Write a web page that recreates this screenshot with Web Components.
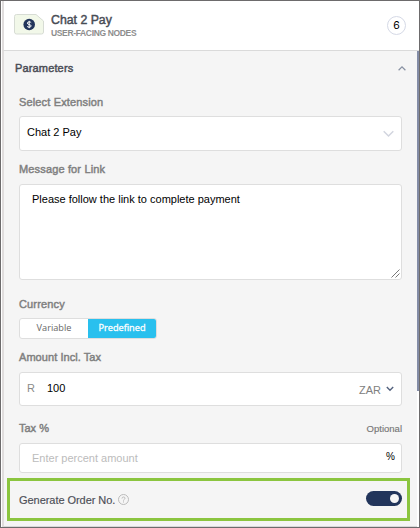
<!DOCTYPE html>
<html lang="en">
<head>
<meta charset="utf-8">
<title>Chat 2 Pay</title>
<style>
    html, body {
        margin: 0;
        height: 100%;
        overflow: hidden;
    }
    body {
        font: 11px/16px "Liberation Sans", Arial, sans-serif;
        color: #000;
    }
</style>
</head>
<body>
<node-panel>
    <node-header slot="header" title="Chat 2 Pay" group="User-facing nodes" count="6"></node-header>
    <panel-section title="Parameters">
        <form-field label="Select Extension" style="--gap: 18px; --label-gap: 6px">
            <select-box value="Chat 2 Pay"></select-box>
        </form-field>
        <form-field label="Message for Link" style="--gap: 10px">
            <text-area value="Please follow the link to complete payment"></text-area>
        </form-field>
        <form-field label="Currency" style="--gap: 16px; --label-gap: 6px">
            <option-switch first="Variable" second="Predefined"></option-switch>
        </form-field>
        <form-field label="Amount Incl. Tax" style="--gap: 10px; --spacing: .06px">
            <amount-input symbol="R" value="100" currency="ZAR"></amount-input>
        </form-field>
        <form-field label="Tax %" hint="Optional" style="--gap: 14px; --spacing: 0">
            <percent-input placeholder="Enter percent amount"></percent-input>
        </form-field>
        <toggle-row label="Generate Order No."></toggle-row>
    </panel-section>
</node-panel>

<script>
class BaseElement extends HTMLElement {
    connectedCallback() {
        if (!this.shadowRoot) {
            this.attachShadow({ mode: 'open' });
        }
        this.shadowRoot.innerHTML = `<style>* { box-sizing: border-box; } span { white-space: nowrap; }</style>${this.template()}`;
    }

    attr(name) {
        return this.getAttribute(name) || '';
    }
}

class NodePanel extends BaseElement {
    template() {
        return `
            <style>
                :host {
                    display: grid;
                    grid-template: 50px 1fr / minmax(0, 1fr) 2px;
                    box-sizing: border-box;
                    width: 420px;
                    height: 528px;
                    border: 1px solid #6d6b6c;
                    background: #fff;
                }
                .head {
                    grid-column: 1 / 3;
                    border-bottom: 1px solid #dadada;
                    border-left: 2px solid #e0dddd;
                    margin-left: 1px;
                }
                .content {
                    background: #f5f5f5;
                    border-left: 2px solid #e0dddd;
                    border-bottom: 1px solid #d8d8d8;
                    margin-left: 1px;
                }
                .thumb {
                    height: 340px;
                    background: #838ca6;
                }
            </style>
            <div class="head"><slot name="header"></slot></div>
            <div class="content"><slot></slot></div>
            <div class="thumb"></div>
        `;
    }
}

class NodeHeader extends BaseElement {
    template() {
        return `
            <style>
                :host {
                    display: flex;
                    height: 49px;
                    padding-left: 10px;
                    box-sizing: border-box;
                }
                svg {
                    flex: none;
                    margin: 12px 7px 0 0;
                }
                .names {
                    flex: 1;
                    display: flex;
                    flex-direction: column;
                    padding-top: 12px;
                }
                .title {
                    font-size: 12.3px;
                    line-height: 15px;
                    color: #484c55;
                    -webkit-text-stroke: .45px;
                }
                .group {
                    font-size: 8.5px;
                    font-weight: bold;
                    line-height: 11px;
                    letter-spacing: -.35px;
                    text-transform: uppercase;
                    color: #8d8d8d;
                }
                .count {
                    width: 19px;
                    height: 19px;
                    margin: 15px 13px 0 0;
                    border: 1px solid #d5d9e6;
                    border-radius: 50%;
                    text-align: center;
                    font: 10.5px/17px Inter, sans-serif;
                }
            </style>
            <svg width="30" height="22" viewBox="0 0 30 22">
                <path d="M2.5 1.5h19.5l7.5 6.5v11a2 2 0 0 1-2 2h-25a2 2 0 0 1-2-2v-15.500a2 2 0 0 1 2-2z" fill="#f2f8e9" stroke="#d7dcd4"/>
                <circle cx="15.200" cy="11.500" r="5.800" fill="#22355b"/>
                <path d="M17.200 9.700q-.6-.8-2-.8-1.800 0-1.800 1.200t1.800 1.400 1.900 1.400-1.900 1.300q-1.500 0-2.100-.9M15.200 7.800v7.400" fill="none" stroke="#fff" stroke-width="1"/>
            </svg>
            <div class="names">
                <span class="title">${this.attr('title')}</span>
                <span class="group">${this.attr('group')}</span>
            </div>
            <span class="count">${this.attr('count')}</span>
        `;
    }
}

class PanelSection extends BaseElement {
    template() {
        return `
            <style>
                :host {
                    display: block;
                    padding: 9px 15px 0;
                }
                header {
                    display: flex;
                    justify-content: space-between;
                    margin: 0 -4px;
                    letter-spacing: .15px;
                    color: #4a4d55;
                    -webkit-text-stroke: .45px;
                }
                header svg {
                    margin-top: 5px;
                }
            </style>
            <header>
                <span>${this.attr('title')}</span>
                <svg width="8" height="7" viewBox="0 0 8 7"><path d="M.6 5.200 4 1.900l3.400 3.300" fill="none" stroke="#8790a2" stroke-width="1.200"/></svg>
            </header>
            <slot></slot>
        `;
    }
}

class FormField extends BaseElement {
    template() {
        return `
            <style>
                :host {
                    display: block;
                    padding-top: var(--gap);
                    width: 383px;
                }
                .label {
                    display: flex;
                    justify-content: space-between;
                    height: 16px;
                    margin-bottom: var(--label-gap, 7px);
                    color: #808080;
                }
                .name {
                    letter-spacing: var(--spacing, .15px);
                    -webkit-text-stroke: .45px;
                }
                .hint {
                    padding-top: 1px;
                    font-size: 9.5px;
                    color: #777;
                    -webkit-text-stroke: .15px;
                }
            </style>
            <div class="label">
                <span class="name">${this.attr('label')}</span>
                <span class="hint">${this.attr('hint')}</span>
            </div>
            <slot></slot>
        `;
    }
}

const boxStyle = `
    :host {
        display: flex;
        align-items: center;
        box-sizing: border-box;
        border: 1px solid #dedede;
        border-radius: 3px;
        background: #fff;
    }
`;

class SelectBox extends BaseElement {
    template() {
        return `
            <style>
                ${boxStyle}
                :host {
                    justify-content: space-between;
                    height: 35px;
                    padding: 0 7px;
                }
                span {
                    margin-top: -3px;
                }
            </style>
            <span>${this.attr('value')}</span>
            <svg width="11" height="8" viewBox="0 0 11 8"><path d="M.7 1.200 5.500 6l4.800-4.800" fill="none" stroke="#d2d5df" stroke-width="1.500"/></svg>
        `;
    }
}

class TextArea extends BaseElement {
    template() {
        return `
            <style>
                ${boxStyle}
                :host {
                    align-items: flex-start;
                    justify-content: space-between;
                    height: 96px;
                    padding: 6px 1px 1px 12px;
                }
                svg {
                    align-self: flex-end;
                }
            </style>
            <span>${this.attr('value')}</span>
            <svg width="9" height="9" viewBox="0 0 9 9"><path d="M.5 8.500l8-8M4.500 8.500l4-4" stroke="#555" stroke-width=".8"/></svg>
        `;
    }
}

class OptionSwitch extends BaseElement {
    template() {
        return `
            <style>
                ${boxStyle}
                :host {
                    width: 138px;
                    height: 21px;
                    overflow: hidden;
                    font: 9.200px/18px "Open Sans", sans-serif;
                    color: #666;
                }
                span {
                    flex: none;
                    width: 68px;
                    height: 19px;
                    text-align: center;
                }
                .active {
                    background: #29c0ee;
                    color: #fff;
                    -webkit-text-stroke: .3px;
                }
            </style>
            <span>${this.attr('first')}</span>
            <span class="active">${this.attr('second')}</span>
        `;
    }
}

class AmountInput extends BaseElement {
    template() {
        return `
            <style>
                ${boxStyle}
                :host {
                    height: 34px;
                    padding: 0 7px;
                }
                .symbol {
                    width: 20px;
                    margin-top: -2px;
                    color: #8a8a8a;
                }
                .value {
                    flex: 1;
                    margin-top: -2px;
                }
                .currency {
                    margin: 2px 5px 0 0;
                    color: #808080;
                }
            </style>
            <span class="symbol">${this.attr('symbol')}</span>
            <span class="value">${this.attr('value')}</span>
            <span class="currency">${this.attr('currency')}</span>
            <svg width="8" height="6" viewBox="0 0 8 6"><path d="M.8 1 4 4.200 7.200 1" fill="none" stroke="#53627e" stroke-width="1.400"/></svg>
        `;
    }
}

class PercentInput extends BaseElement {
    template() {
        return `
            <style>
                ${boxStyle}
                :host {
                    justify-content: space-between;
                    height: 30px;
                    padding: 0 6px 0 12px;
                }
                .placeholder {
                    color: #bcbcbc;
                }
                .unit {
                    font-size: 10px;
                    margin-top: -2px;
                }
            </style>
            <span class="placeholder">${this.attr('placeholder')}</span>
            <span class="unit">%</span>
        `;
    }
}

class ToggleRow extends BaseElement {
    template() {
        return `
            <style>
                :host {
                    display: flex;
                    align-items: center;
                    box-sizing: border-box;
                    width: 403px;
                    height: 43px;
                    margin: 5px 0 0 -12px;
                    padding: 0 5px 0 9px;
                    border: 3px solid #8bc53f;
                    color: #4c4f57;
                }
                .name {
                    letter-spacing: -.05px;
                    -webkit-text-stroke: .15px;
                }
                .help {
                    margin-left: 3px;
                    flex: none;
                }
                .switch {
                    display: flex;
                    align-items: center;
                    justify-content: flex-end;
                    width: 36px;
                    height: 15px;
                    margin: -2px 0 0 auto;
                    padding-right: 3px;
                    border-radius: 8px;
                    background: #22355b;
                }
                .knob {
                    width: 9px;
                    height: 9px;
                    border-radius: 50%;
                    background: #f5f5f5;
                }
            </style>
            <span class="name">${this.attr('label')}</span>
            <svg class="help" width="11" height="11" viewBox="0 0 11 11" fill="none" stroke="#bbb">
                <circle cx="5.500" cy="5.500" r="5"/>
                <path d="M4 4.500q0-1.500 1.500-1.500T7 4.300q0 .7-.8 1.100t-.7 1.200M5.500 7.400v1.100"/>
            </svg>
            <div class="switch"><div class="knob"></div></div>
        `;
    }
}

customElements.define('node-panel', NodePanel);
customElements.define('node-header', NodeHeader);
customElements.define('panel-section', PanelSection);
customElements.define('form-field', FormField);
customElements.define('select-box', SelectBox);
customElements.define('text-area', TextArea);
customElements.define('option-switch', OptionSwitch);
customElements.define('amount-input', AmountInput);
customElements.define('percent-input', PercentInput);
customElements.define('toggle-row', ToggleRow);
</script>
</body>
</html>
